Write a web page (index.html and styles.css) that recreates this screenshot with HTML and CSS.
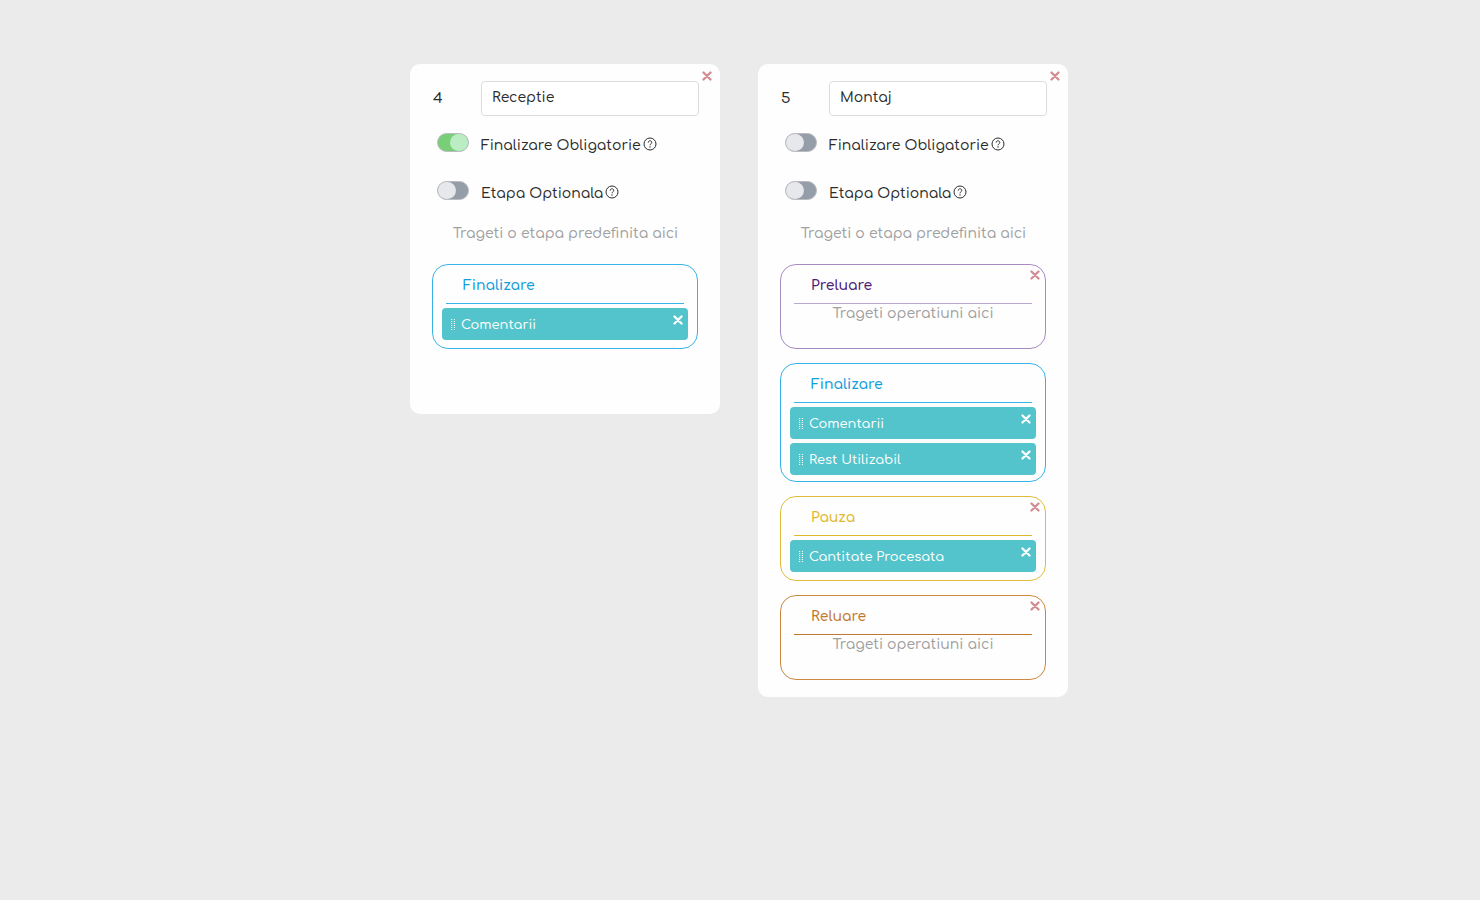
FILE: index.html
```
<!DOCTYPE html>
<html lang="ro">
    <head>
        <meta charset="utf-8">
        <meta name="viewport" content="width=device-width, initial-scale=1">
        <title>Etape</title>
        <link rel="stylesheet" href="styles.css">
    </head>
    <body>
        <!-- shared icons -->
        <svg class="sprite" aria-hidden="true">
            <symbol id="x" viewBox="0 0 10 10">
                <path d="M1.5 1.5 L8.5 8.5 M8.5 1.5 L1.5 8.5" fill="none" stroke="currentColor" stroke-width="2.3" stroke-linecap="round"/>
            </symbol>
            <symbol id="help" viewBox="0 0 14 14">
                <circle cx="7" cy="7" r="6" fill="none" stroke="currentColor"/>
                <path d="M5.2 5.6 C5.2 3.2 8.8 3.2 8.8 5.5 C8.8 6.8 7 6.8 7 8.3" fill="none" stroke="currentColor"/>
                <circle cx="7" cy="10" r=".7" fill="currentColor"/>
            </symbol>
            <symbol id="grip" viewBox="0 0 4 12">
                <path d="M.5 1 V12 M3.5 1 V12" fill="none" stroke="currentColor" stroke-dasharray="1 1"/>
                <path d="M2 1 V12" fill="none" stroke="currentColor" stroke-dasharray="1 1" opacity=".3"/>
            </symbol>
        </svg>

        <main class="board">
            <section class="card">
                <button class="close" aria-label="Sterge etapa"><svg><use href="#x"/></svg></button>
                <div class="row head">
                    <label class="num" for="name4">4</label>
                    <input class="name" id="name4" type="text" value="Receptie">
                </div>
                <div class="row">
                    <input class="switch" id="fin4" type="checkbox" checked>
                    <label for="fin4">Finalizare Obligatorie <svg class="help"><use href="#help"/></svg></label>
                </div>
                <div class="row">
                    <input class="switch" id="opt4" type="checkbox">
                    <label for="opt4">Etapa Optionala <svg class="help"><use href="#help"/></svg></label>
                </div>
                <p class="hint drop">Trageti o etapa predefinita aici</p>
                <div class="stages">
                    <div class="stage blue">
                        <h2>Finalizare</h2>
                        <ul>
                            <li><svg class="grip"><use href="#grip"/></svg>Comentarii<button class="close" aria-label="Sterge"><svg><use href="#x"/></svg></button></li>
                        </ul>
                    </div>
                </div>
            </section>

            <section class="card">
                <button class="close" aria-label="Sterge etapa"><svg><use href="#x"/></svg></button>
                <div class="row head">
                    <label class="num" for="name5">5</label>
                    <input class="name" id="name5" type="text" value="Montaj">
                </div>
                <div class="row">
                    <input class="switch" id="fin5" type="checkbox">
                    <label for="fin5">Finalizare Obligatorie <svg class="help"><use href="#help"/></svg></label>
                </div>
                <div class="row">
                    <input class="switch" id="opt5" type="checkbox">
                    <label for="opt5">Etapa Optionala <svg class="help"><use href="#help"/></svg></label>
                </div>
                <p class="hint drop">Trageti o etapa predefinita aici</p>
                <div class="stages">
                    <div class="stage purple">
                        <button class="close" aria-label="Sterge"><svg><use href="#x"/></svg></button>
                        <h2>Preluare</h2>
                        <p class="hint">Trageti operatiuni aici</p>
                    </div>
                    <div class="stage blue">
                        <h2>Finalizare</h2>
                        <ul>
                            <li><svg class="grip"><use href="#grip"/></svg>Comentarii<button class="close" aria-label="Sterge"><svg><use href="#x"/></svg></button></li>
                            <li><svg class="grip"><use href="#grip"/></svg>Rest Utilizabil<button class="close" aria-label="Sterge"><svg><use href="#x"/></svg></button></li>
                        </ul>
                    </div>
                    <div class="stage yellow">
                        <button class="close" aria-label="Sterge"><svg><use href="#x"/></svg></button>
                        <h2>Pauza</h2>
                        <ul>
                            <li><svg class="grip"><use href="#grip"/></svg>Cantitate Procesata<button class="close" aria-label="Sterge"><svg><use href="#x"/></svg></button></li>
                        </ul>
                    </div>
                    <div class="stage orange">
                        <button class="close" aria-label="Sterge"><svg><use href="#x"/></svg></button>
                        <h2>Reluare</h2>
                        <p class="hint">Trageti operatiuni aici</p>
                    </div>
                </div>
            </section>
        </main>
    </body>
</html>
```
FILE: styles.css
```
*{
    box-sizing: border-box;
}
body{
    margin: 0;
    background: #ebebeb;
    color: #2b2b2b;
    font: 500 14px/20px Comfortaa, "Noto Sans", sans-serif;
}
h2, p, ul{
    margin: 0;
    padding: 0;
}
button{
    padding: 0;
    border: 0;
    background: none;
    cursor: pointer;
}
.sprite{
    position: absolute;
    width: 0;
    height: 0;
}

/* cards */
.board{
    display: flex;
    flex-wrap: wrap;
    justify-content: center;
    align-items: flex-start;
    padding: 64px 0;
}
.card{
    position: relative;
    width: 310px;
    min-height: 350px;
    margin: 0 20px 0 18px;
    padding: 17px 21px 17px 22px;
    border-radius: 10px;
    background: #fefefe;
}
.row{
    display: grid;
    grid-template-columns: 49px 1fr;
    align-items: center;
    height: 48px;
    padding-top: 2px;
}
.head{
    height: 35px;
    margin-bottom: 5px;
    padding-top: 0;
}
.num{
    padding-left: 1px;
    font-size: 15px;
}
.name{
    width: 100%;
    height: 35px;
    padding: 0 10px 3px;
    border: 1px solid #dcdcdc;
    border-radius: 4px;
    background: #fff;
    color: inherit;
    font: inherit;
}

/* on/off switch */
.switch{
    appearance: none;
    width: 32px;
    height: 19px;
    margin: 0 0 7px 5px;
    border: 1px solid #b9bbbe;
    border-radius: 10px;
    background: #959da9;
}
.switch::before{
    content: "";
    display: block;
    width: 18px;
    height: 17px;
    border-radius: 9px;
    background: #e6e8ec;
}
.switch:checked{
    background: #79cf77;
}
.switch:checked::before{
    margin-left: auto;
    background: #bbedc5;
}
.help{
    width: 14px;
    height: 14px;
    margin-left: -2px;
    vertical-align: -1px;
}

/* grey drop texts */
.hint{
    color: #a0a0a0;
    text-align: center;
}
.drop{
    margin-bottom: 13px;
    line-height: 34px;
}

/* stages */
.stages{
    display: grid;
    gap: 14px;
    margin-right: 1px;
}
.stage{
    position: relative;
    min-height: 85px;
    padding: 0 9px 6px;
    border: 1px solid;
    border-radius: 16px;
}
.stage h2{
    height: 39px;
    margin: 0 4px;
    padding-left: 17px;
    border-bottom: 1px solid;
    font-size: 14px;
    font-weight: 600;
    line-height: 41px;
}
.stage.blue, .blue h2{
    border-color: #38b3e5;
    color: #129fdc;
}
.stage.purple{
    border-color: #a98bc4;
    color: #4d2078;
}
.purple h2{
    border-color: #bba5d2;
}
.stage.yellow{
    border-color: #e0bd38;
    color: #dfb92c;
}
.stage.orange{
    border-color: #cb8841;
    color: #c27a30;
}

/* operations */
.stage ul{
    display: grid;
    gap: 4px;
    margin-top: 4px;
    list-style: none;
}
.stage li{
    position: relative;
    display: flex;
    align-items: center;
    height: 32px;
    padding: 2px 0 0 9px;
    border-radius: 4px;
    background: #53c4cb;
    color: #fff;
    font-size: 13px;
}
.grip{
    width: 4px;
    height: 12px;
    margin: 0 6px 2px 0;
}

/* x in the corner */
.close{
    position: absolute;
    top: 7px;
    right: 8px;
    width: 10px;
    height: 10px;
    color: #d38c90;
}
.close svg{
    display: block;
    width: 10px;
    height: 10px;
}
.stage > .close{
    top: 5px;
    right: 5px;
}
.stage li .close{
    right: 5px;
    color: #fff;
}
```
